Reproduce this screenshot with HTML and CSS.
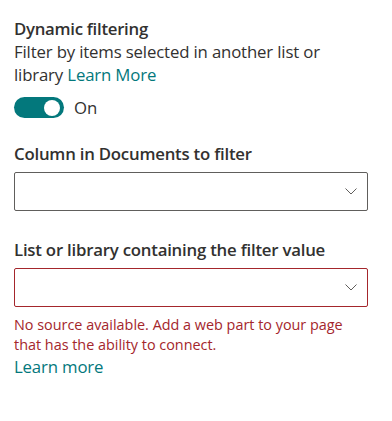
FILE: index.html
```html
<!DOCTYPE html>
<html lang="en">
<head>
<meta charset="utf-8">
<title>Dynamic filtering</title>
<link rel="stylesheet" href="styles.css">
</head>
<body>
<div class="panel">
  <div class="title">Dynamic filtering</div>
  <div class="desc">Filter by items selected in another list or library <a class="link inline-link" href="#">Learn More</a></div>
  <div class="toggle-row">
    <span class="toggle"><span class="knob"></span></span>
    <span class="toggle-label">On</span>
  </div>

  <div class="label label-first">Column in Documents to filter</div>
  <div class="dropdown">
    <span class="dropdown-value"></span>
    <svg class="chevron" width="12" height="7" viewBox="0 0 12 7"><path d="M0.5 0.5 L6 6 L11.5 0.5" fill="none" stroke="#605e5c" stroke-width="1"/></svg>
  </div>

  <div class="label label-second">List or library containing the filter value</div>
  <div class="dropdown dropdown-error">
    <span class="dropdown-value"></span>
    <svg class="chevron" width="12" height="7" viewBox="0 0 12 7"><path d="M0.5 0.5 L6 6 L11.5 0.5" fill="none" stroke="#605e5c" stroke-width="1"/></svg>
  </div>
  <div class="error">No source available. Add a web part to your page that has the ability to connect.</div>
  <a class="link learn" href="#">Learn more</a>
</div>
</body>
</html>
```

FILE: styles.css
```css
html, body {
  margin: 0;
  padding: 0;
  background: #ffffff;
}
body {
  font-family: "Open Sans", "Noto Sans", sans-serif;
  color: #323130;
  font-size: 16.8px;
  letter-spacing: -0.16px;
}
.panel {
  padding: 18px 24px 0 14px;
  display: flex;
  flex-direction: column;
}
.title {
  font-weight: 600;
  line-height: 22px;
  letter-spacing: -0.28px;
}
.desc {
  line-height: 23px;
}
.link {
  color: #03787c;
  text-decoration: none;
}
.inline-link {
  display: inline-block;
  line-height: 23px;
}
.toggle-row {
  display: flex;
  align-items: center;
  gap: 10px;
  margin-top: 11px;
  height: 21px;
}
.toggle {
  width: 50px;
  height: 21px;
  border-radius: 11px;
  background: #03787c;
  display: flex;
  align-items: center;
  justify-content: flex-end;
  padding-right: 4px;
  box-sizing: border-box;
}
.knob {
  width: 16px;
  height: 16px;
  border-radius: 50%;
  background: #ffffff;
}
.toggle-label {
  line-height: 21px;
}
.label {
  font-weight: 600;
  line-height: 22px;
  letter-spacing: -0.22px;
}
.label-first {
  margin-top: 25px;
}
.label-second {
  margin-top: 28px;
}
.dropdown {
  margin-top: 7px;
  height: 39px;
  box-sizing: border-box;
  border: 1px solid #605e5c;
  border-radius: 2px;
  display: flex;
  align-items: center;
  justify-content: space-between;
  padding: 0 10px 0 8px;
}
.dropdown-error {
  border-color: #a4262c;
}
.chevron {
  display: block;
}
.error {
  margin-top: 8px;
  font-size: 14.4px;
  line-height: 19.5px;
  letter-spacing: 0;
  color: #a4262c;
}
.learn {
  margin-top: 2px;
  line-height: 22px;
  align-self: flex-start;
}
```
